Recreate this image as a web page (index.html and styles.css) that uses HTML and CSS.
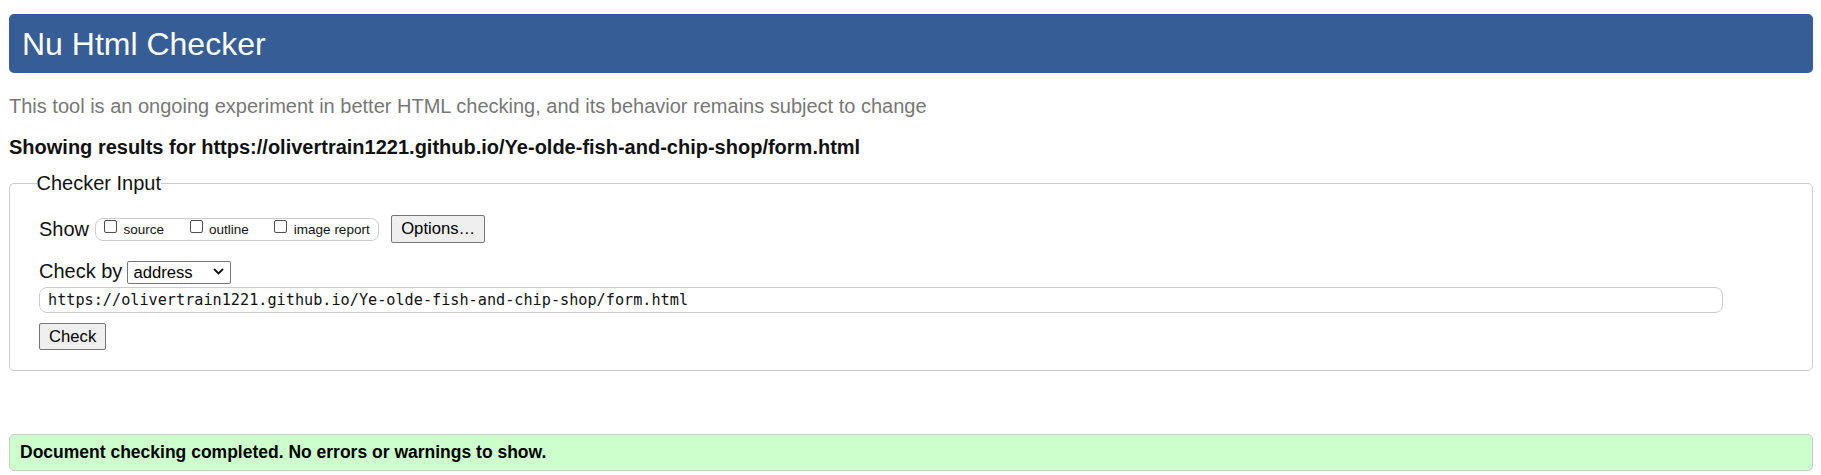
FILE: index.html
```html
<!DOCTYPE html>
<html lang="en">
<head>
<meta charset="utf-8">
<title>Nu Html Checker</title>
<link rel="stylesheet" href="styles.css">
</head>
<body>
<div class="page">
  <h1 class="banner">Nu Html Checker</h1>
  <p class="lede">This tool is an ongoing experiment in better HTML checking, and its behavior remains subject to change</p>
  <p class="results-for">Showing results for https://olivertrain1221.github.io/Ye-olde-fish-and-chip-shop/form.html</p>

  <form class="checker-form">
    <fieldset class="checker-input">
      <legend class="checker-legend">Checker Input</legend>

      <div class="row row-show">
        <span class="row-label">Show</span>
        <div class="show-options">
          <label class="opt"><input type="checkbox" class="cb"><span>source</span></label>
          <label class="opt"><input type="checkbox" class="cb"><span>outline</span></label>
          <label class="opt"><input type="checkbox" class="cb"><span>image report</span></label>
        </div>
        <button type="button" class="btn btn-options">Options…</button>
      </div>

      <div class="row row-checkby">
        <span class="row-label">Check by</span>
        <span class="select-wrap">
          <select class="select">
            <option>address</option>
          </select>
          <svg class="chevron" width="11" height="7" viewBox="0 0 11 7" aria-hidden="true"><polyline points="1,1 5.5,5.5 10,1" fill="none" stroke="#111" stroke-width="1.8"/></svg>
        </span>
      </div>

      <input class="url" type="text" value="https://olivertrain1221.github.io/Ye-olde-fish-and-chip-shop/form.html">

      <div class="row-submit">
        <button type="button" class="btn btn-check">Check</button>
      </div>
    </fieldset>
  </form>

  <p class="status success">Document checking completed. No errors or warnings to show.</p>
</div>
</body>
</html>
```

FILE: styles.css
```css
html, body {
  margin: 0;
  padding: 0;
  background: #fff;
}

body {
  font-family: "Liberation Sans", Arial, sans-serif;
  font-size: 20px;
  color: #111;
}

.page {
  padding: 14px 8px 0 9px;
}

.banner {
  margin: 0;
  height: 59px;
  line-height: 61px;
  padding-left: 13px;
  background: #365d95;
  color: #fff;
  font-size: 32px;
  font-weight: normal;
  border-radius: 5px;
}

.lede {
  margin: 22px 0 0;
  line-height: 23px;
  color: #777;
}

.results-for {
  margin: 18px 0 0;
  line-height: 23px;
  font-weight: bold;
  color: #111;
}

.checker-form {
  margin: 13px 0 0;
}

.checker-input {
  margin: 0;
  border: 1px solid #ccc;
  border-radius: 5px;
  padding: 20px 29px 20px 29px;
  min-width: 0;
}

.checker-legend {
  padding: 0;
  margin-left: -2.5px;
  font-size: 20px;
  line-height: 23px;
  color: #111;
}

.row {
  display: flex;
  align-items: center;
}

.row-show {
  height: 28px;
}

.row-label {
  line-height: 23px;
  white-space: nowrap;
}

.show-options {
  display: flex;
  align-items: center;
  gap: 25.5px;
  height: 23px;
  box-sizing: border-box;
  margin-left: 6px;
  padding: 0 8px;
  border: 1px solid #ccc;
  border-radius: 8px;
}

.opt {
  display: flex;
  align-items: center;
  font-size: 13.5px;
  line-height: 15px;
  color: #111;
}

.cb {
  appearance: none;
  -webkit-appearance: none;
  width: 13px;
  height: 13px;
  box-sizing: border-box;
  margin: 0 6.5px 6px 0;
  border: 1px solid #4f4f4f;
  border-radius: 2px;
  background: #fff;
}

.btn {
  box-sizing: border-box;
  font-family: "Liberation Sans", Arial, sans-serif;
  font-size: 16.67px;
  color: #000;
  background: #efefef;
  border: 1px solid #767676;
  border-radius: 2px;
  padding: 0 9px;
  margin: 0;
}

.btn-options {
  height: 28px;
  margin-left: 12.5px;
}

.row-checkby {
  margin-top: 17px;
  height: 23px;
}

.select-wrap {
  position: relative;
  display: inline-block;
  margin-left: 5px;
  height: 23px;
}

.select {
  appearance: none;
  -webkit-appearance: none;
  box-sizing: border-box;
  width: 104px;
  height: 23px;
  margin: 0;
  padding: 0 0 0 5px;
  font-family: "Liberation Sans", Arial, sans-serif;
  font-size: 16.67px;
  color: #000;
  background: #fff;
  border: 1px solid #767676;
  border-radius: 2px;
}

.chevron {
  position: absolute;
  right: 7px;
  top: 8px;
  pointer-events: none;
}

.url {
  display: block;
  box-sizing: border-box;
  width: 1684px;
  height: 26px;
  margin: 4px 0 0;
  padding: 0 8px;
  border: 1px solid #ccc;
  border-radius: 8px;
  font-family: "DejaVu Sans Mono", "Liberation Mono", monospace;
  font-size: 15.2px;
  color: #111;
  background: #fff;
}

.row-submit {
  margin-top: 10px;
  display: flex;
}

.btn-check {
  height: 27px;
}

.status {
  margin: 63px 0 0;
  box-sizing: border-box;
  height: 37px;
  line-height: 35px;
  padding: 0 10px;
  border: 1px solid #ccc;
  border-radius: 5px;
  font-size: 17.5px;
  font-weight: bold;
  color: #000;
}

.success {
  background: #ccffcc;
}
```
